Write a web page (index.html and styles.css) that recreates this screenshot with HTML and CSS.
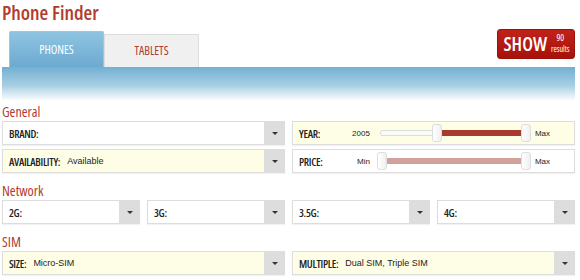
FILE: index.html
```html
<!DOCTYPE html>
<html lang="en">
<head>
	<meta charset="UTF-8">
	<title>Phone Finder</title>
	<link rel="stylesheet" href="styles.css">
</head>
<body>
	<div class="finder">
		<h1 class="title">Phone Finder</h1>

		<div class="top">
			<div class="tabs">
				<div class="tab active">PHONES</div>
				<div class="tab">TABLETS</div>
			</div>
			<button class="show"><span class="word">SHOW</span><span class="count"><b>90</b><i>results</i></span></button>
		</div>
		<div class="band"></div>

		<h2 class="group">General</h2>
		<div class="grid half">
			<div class="field">
				<span class="label">BRAND:</span>
				<span class="arrow"></span>
			</div>
			<div class="field set">
				<span class="label">YEAR:</span>
				<div class="slider">
					<span class="val left">2005</span>
					<div class="track">
						<div class="range" style="left: 38%; right: 0"></div>
						<span class="handle" style="left: 38%"></span>
						<span class="handle" style="left: 100%"></span>
					</div>
					<span class="val">Max</span>
				</div>
			</div>
			<div class="field set">
				<span class="label">AVAILABILITY:</span>
				<span class="value">Available</span>
				<span class="arrow"></span>
			</div>
			<div class="field">
				<span class="label">PRICE:</span>
				<div class="slider">
					<span class="val left">Min</span>
					<div class="track">
						<div class="range pale" style="left: 0; right: 0"></div>
						<span class="handle" style="left: 0"></span>
						<span class="handle" style="left: 100%"></span>
					</div>
					<span class="val">Max</span>
				</div>
			</div>
		</div>

		<h2 class="group">Network</h2>
		<div class="grid quarter">
			<div class="field"><span class="label">2G:</span><span class="arrow"></span></div>
			<div class="field"><span class="label">3G:</span><span class="arrow"></span></div>
			<div class="field"><span class="label">3.5G:</span><span class="arrow"></span></div>
			<div class="field"><span class="label">4G:</span><span class="arrow"></span></div>
		</div>

		<h2 class="group">SIM</h2>
		<div class="grid half">
			<div class="field set">
				<span class="label">SIZE:</span>
				<span class="value">Micro-SIM</span>
				<span class="arrow"></span>
			</div>
			<div class="field set">
				<span class="label">MULTIPLE:</span>
				<span class="value">Dual SIM, Triple SIM</span>
				<span class="arrow"></span>
			</div>
		</div>
	</div>
</body>
</html>
```

FILE: styles.css
```css
body {
	margin: 0;
	background: #fff;
	font-family: "Liberation Sans", Arial, sans-serif;
}
.finder {
	width: 573px;
	margin-left: 2px;
}
.title, .group, .tab, .show, .label {
	font-family: "Open Sans", "Noto Sans", sans-serif;
	font-stretch: 75%;
}
.title {
	margin: 0 0 4px;
	font-size: 20px;
	line-height: 25px;
	font-weight: 600;
	color: #b23b2c;
}

/* tabs + button */
.top {
	display: flex;
	justify-content: space-between;
	align-items: flex-start;
	height: 38px;
	padding-left: 7px;
}
.tabs {
	display: flex;
	align-items: flex-end;
	height: 38px;
}
.tab {
	width: 93px;
	height: 32px;
	line-height: 32px;
	text-align: center;
	font-size: 12px;
	color: #b23b2c;
	background: #f0f0f0;
	border: 1px solid #ddd;
	border-bottom: 0;
}
.tab.active {
	height: 35px;
	line-height: 35px;
	color: #fff;
	background: linear-gradient(#8ec4e1, #6daad0);
	border-color: #9cc6df;
	border-radius: 2px 2px 0 0;
}
.show {
	width: 78px;
	height: 30px;
	padding: 0 0 0 1px;
	display: flex;
	align-items: center;
	justify-content: center;
	gap: 4px;
	border: 1px solid #9a120c;
	border-radius: 3px;
	background: linear-gradient(#c0221a, #a8120c);
	color: #fff;
	cursor: pointer;
}
.word {
	font-size: 19px;
	line-height: 22px;
	font-weight: 600;
}
.count {
	display: flex;
	flex-direction: column;
	align-items: center;
	margin-top: -2px;
}
.count b, .count i {
	font-style: normal;
	font-weight: normal;
	font-size: 8px;
	line-height: 11px;
}
.count b { font-size: 9px; }
.band {
	height: 34px;
	background: linear-gradient(#72b0d2, #a9cfe3 55%, #fff);
}

/* groups */
.group {
	margin: 3px 0 0;
	height: 17px;
	font-size: 14px;
	line-height: 16px;
	font-weight: normal;
	color: #b23b2c;
}
.grid {
	display: grid;
	column-gap: 7px;
	row-gap: 4px;
	margin-bottom: 10px;
}
.half { grid-template-columns: 1fr 1fr; }
.quarter { grid-template-columns: 1fr 1fr 1fr 1fr; }

.field {
	display: flex;
	align-items: center;
	height: 22px;
	border: 1px solid #ddd;
	background: #fff;
	box-shadow: 0 1px 1px rgba(0, 0, 0, 0.05);
}
.field.set { background: #fefee6; }
.label {
	padding-left: 6px;
	font-size: 11px;
	font-weight: 600;
	letter-spacing: -0.3px;
	color: #222;
}
.value {
	margin-left: 7px;
	font-size: 9px;
	color: #222;
}
.arrow {
	margin-left: auto;
	width: 20px;
	height: 22px;
	background: #ddd;
	position: relative;
}
.arrow::after {
	content: "";
	position: absolute;
	left: 8px;
	top: 10px;
	border: 3px solid transparent;
	border-top: 3px solid #333;
	border-bottom: 0;
}

/* range sliders */
.slider {
	display: flex;
	align-items: center;
	margin-left: auto;
	margin-right: 24px;
}
.val {
	font-size: 8px;
	color: #222;
}
.val.left {
	width: 30px;
	text-align: right;
	margin-right: 10px;
}
.track {
	position: relative;
	width: 144px;
	height: 4px;
	margin-right: 9px;
	background: #fafafa;
	border: 1px solid #ddd;
	border-radius: 2px;
}
.range {
	position: absolute;
	top: -1px;
	bottom: -1px;
	background: #a63a2c;
}
.range.pale { background: #d3a19b; }
.handle {
	position: absolute;
	top: -7px;
	width: 8px;
	height: 16px;
	margin-left: -4px;
	background: linear-gradient(90deg, #fff, #f0f0f0);
	border: 1px solid #ddd;
	border-radius: 3px;
}
```
